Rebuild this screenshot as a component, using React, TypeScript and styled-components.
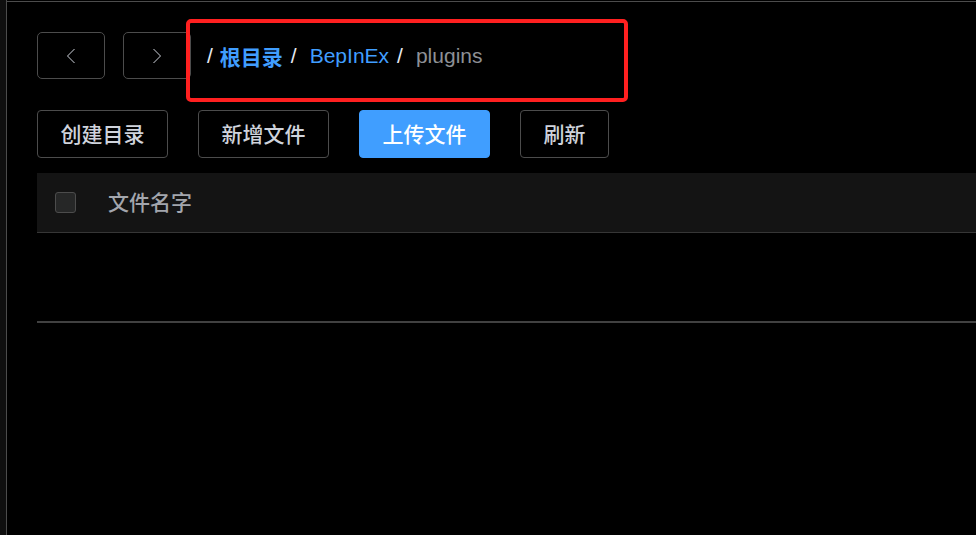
import styled, { createGlobalStyle } from "styled-components";

const GlobalStyle = createGlobalStyle`
  html, body {
    margin: 0;
    padding: 0;
    background: #000;
  }
  body {
    font-family: "Noto Sans CJK SC", "Liberation Sans", sans-serif;
    color: #cfd3dc;
  }
`;

const Page = styled.div`
  display: flex;
  min-height: 535px;
  overflow: hidden;
`;

const SideStrip = styled.div`
  width: 6px;
  flex: none;
  background: #0f0f0f;
  border-right: 1px solid #4c4c4c;
`;

const Main = styled.main`
  flex: 1;
  margin-top: 1px;
  border-top: 1px solid #4c4c4c;
  padding: 30px 0 0 30px;
`;

const NavRow = styled.div`
  display: flex;
  align-items: center;
  gap: 18px;
  height: 47px;
`;

const NavButton = styled.button`
  width: 68px;
  height: 47px;
  display: flex;
  align-items: center;
  justify-content: center;
  background: transparent;
  border: 1px solid #4c4c4c;
  border-radius: 5px;
  padding: 0;
`;

const Crumbs = styled.nav`
  position: relative;
  display: flex;
  align-items: center;
  margin-left: -2px;
  font-family: "Liberation Sans", "Noto Sans CJK SC", sans-serif;
  font-size: 21px;
`;

const Highlight = styled.div`
  position: absolute;
  left: -21px;
  top: -22px;
  width: 442px;
  height: 83px;
  box-sizing: border-box;
  border: 4px solid #ff2020;
  border-radius: 5px;
  pointer-events: none;
`;

const Sep = styled.span<{ $tight?: boolean }>`
  color: #e5eaf3;
  margin-right: ${(p) => (p.$tight ? 7 : 13)}px;
`;

const Crumb = styled.span<{ $current?: boolean; $bold?: boolean }>`
  color: ${(p) => (p.$current ? "#8d9095" : "#409eff")};
  font-weight: ${(p) => (p.$bold ? 700 : 400)};
  margin-right: 8px;
`;

const Toolbar = styled.div`
  display: flex;
  gap: 30px;
  margin-top: 31px;
`;

const ActionButton = styled.button<{ $primary?: boolean }>`
  height: 48px;
  padding: 0 22.5px 2px;
  border-radius: 4px;
  font-family: "Noto Sans CJK SC", sans-serif;
  font-size: 21px;
  font-weight: 500;
  line-height: 1;
  color: ${(p) => (p.$primary ? "#fff" : "#cfd3dc")};
  background: ${(p) => (p.$primary ? "#409eff" : "transparent")};
  border: 1px solid ${(p) => (p.$primary ? "#409eff" : "#4c4c4c")};
`;

const Table = styled.div`
  margin-top: 15px;
`;

const HeaderRow = styled.div`
  display: flex;
  align-items: center;
  gap: 32px;
  height: 59px;
  padding-left: 18px;
  background: #141414;
  border-bottom: 1px solid #363636;
`;

const Checkbox = styled.span`
  width: 19px;
  height: 19px;
  border: 1px solid #4c4c4c;
  border-radius: 3px;
  background: #262727;
`;

const HeaderCell = styled.span`
  font-size: 21px;
  font-weight: 500;
  line-height: 1;
  padding-bottom: 3px;
  color: #a3a6ad;
`;

const EmptyBody = styled.div`
  height: 88px;
  border-bottom: 2px solid #414141;
`;

const Chevron = ({ dir }: { dir: "left" | "right" }) => (
  <svg width="10" height="16" viewBox="0 0 10 16">
    <polyline
      points={dir === "left" ? "8.5,1 1.5,8 8.5,15" : "1.5,1 8.5,8 1.5,15"}
      fill="none"
      stroke="#cfd3dc"
      strokeWidth="1"
    />
  </svg>
);

const App = () => {
  return (
    <>
      <GlobalStyle />
      <Page>
        <SideStrip />
        <Main>
          <NavRow>
            <NavButton>
              <Chevron dir="left" />
            </NavButton>
            <NavButton>
              <Chevron dir="right" />
            </NavButton>
            <Crumbs>
              <Highlight />
              <Sep $tight>/</Sep>
              <Crumb $bold>根目录</Crumb>
              <Sep>/</Sep>
              <Crumb>BepInEx</Crumb>
              <Sep>/</Sep>
              <Crumb $current>plugins</Crumb>
            </Crumbs>
          </NavRow>
          <Toolbar>
            <ActionButton>创建目录</ActionButton>
            <ActionButton>新增文件</ActionButton>
            <ActionButton $primary>上传文件</ActionButton>
            <ActionButton>刷新</ActionButton>
          </Toolbar>
          <Table>
            <HeaderRow>
              <Checkbox />
              <HeaderCell>文件名字</HeaderCell>
            </HeaderRow>
            <EmptyBody />
          </Table>
        </Main>
      </Page>
    </>
  );
};

export default App;
